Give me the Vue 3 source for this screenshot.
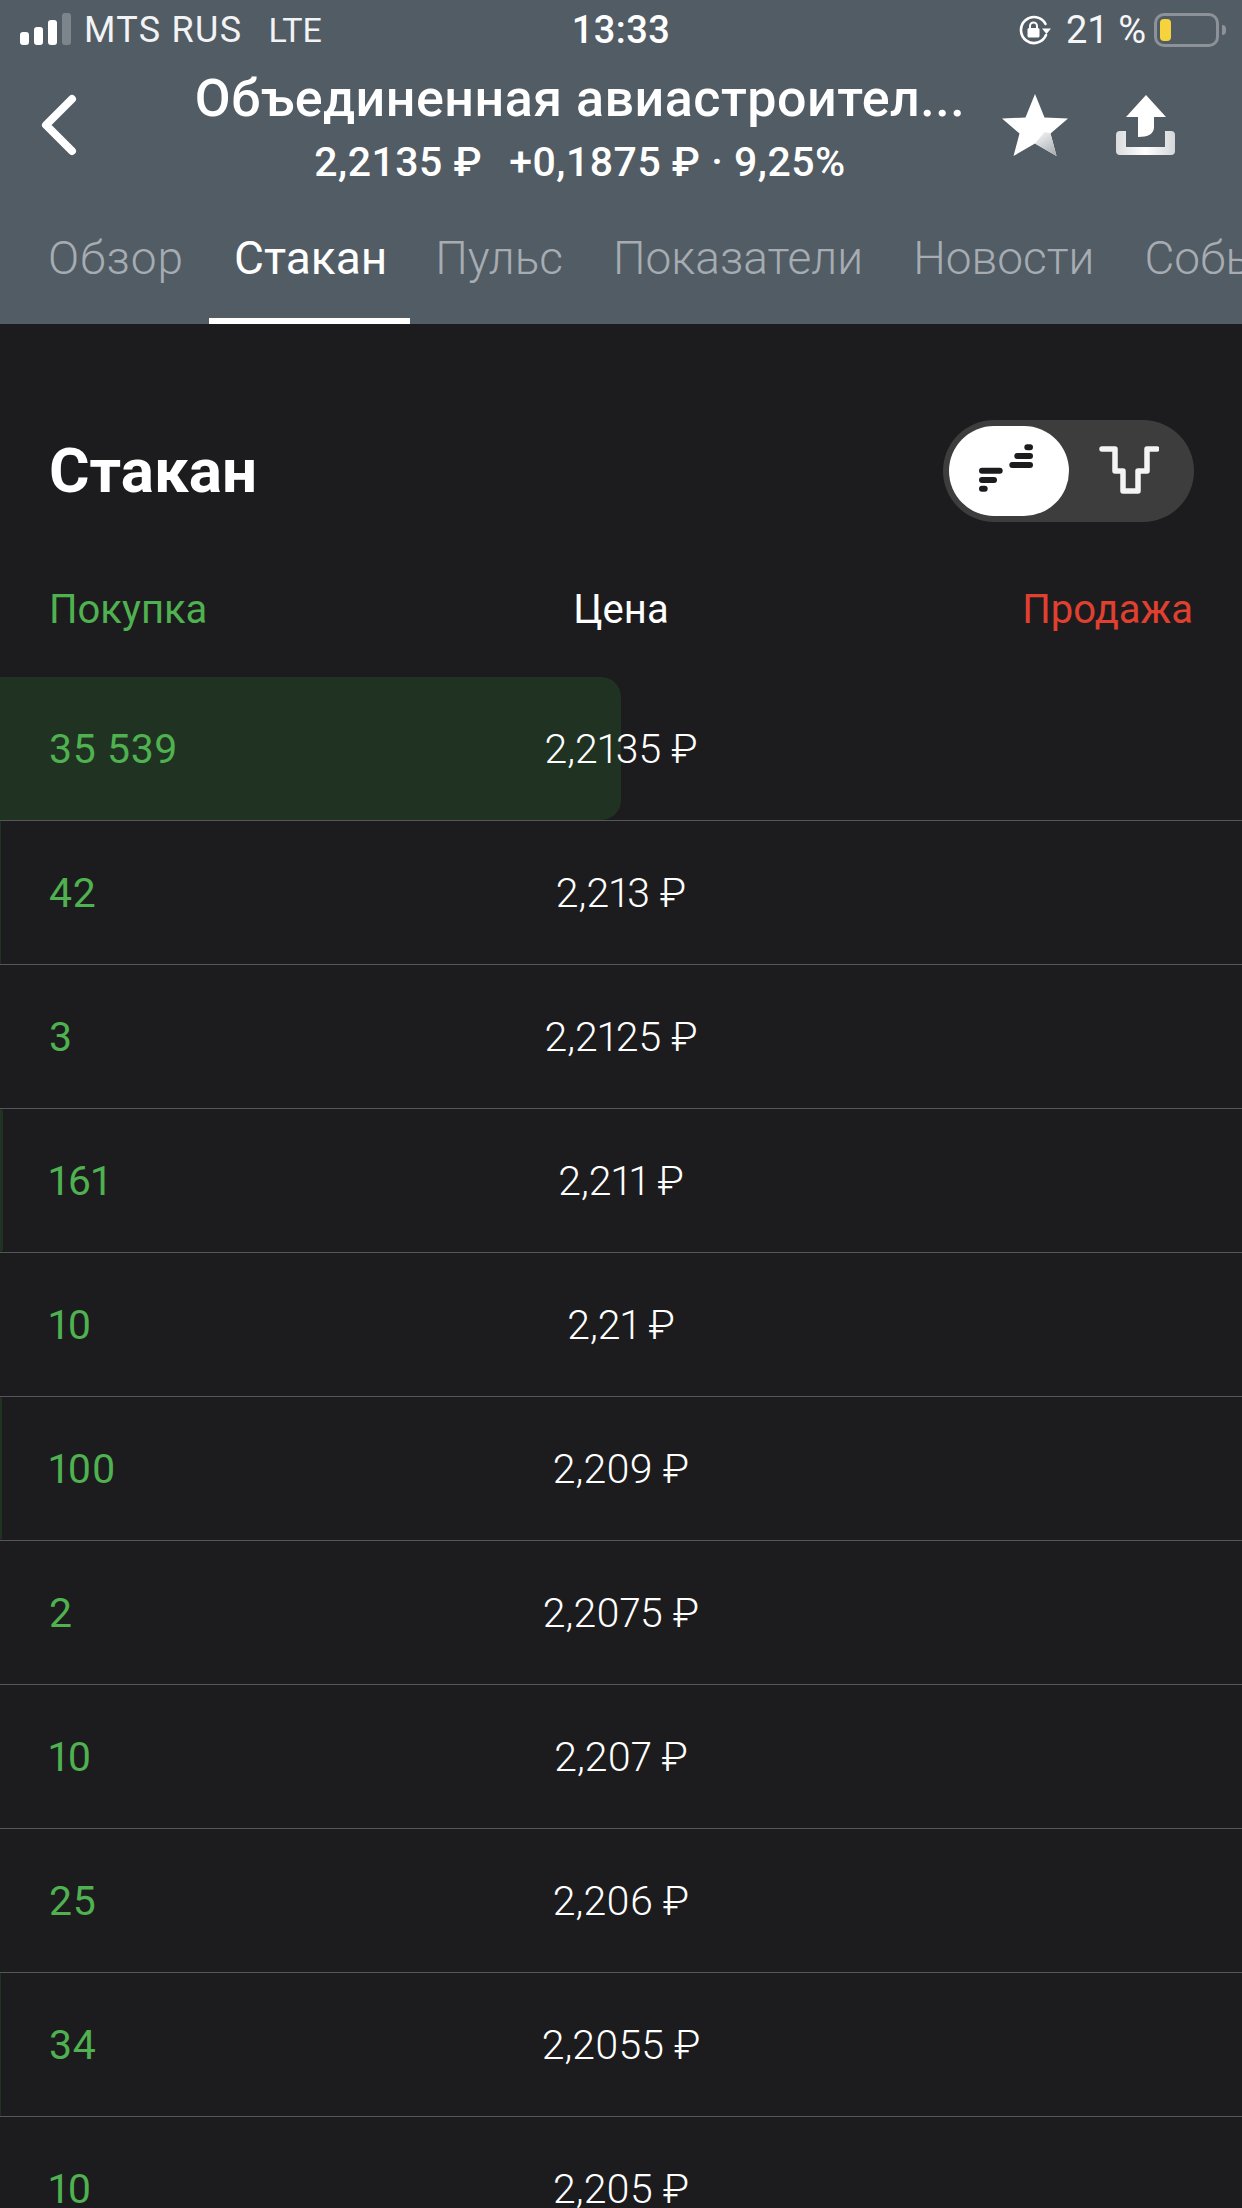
<script setup>
const tabs = [
  { label: 'Обзор' },
  { label: 'Стакан', active: true },
  { label: 'Пульс' },
  { label: 'Показатели' },
  { label: 'Новости' },
  { label: 'События' },
]
const rows = [
  { qty: '35 539', price: '2,2135 ₽', bar: 621 },
  { qty: '42', price: '2,213 ₽', bar: 1 },
  { qty: '3', price: '2,2125 ₽', bar: 0 },
  { qty: '161', price: '2,211 ₽', bar: 3 },
  { qty: '10', price: '2,21 ₽', bar: 0 },
  { qty: '100', price: '2,209 ₽', bar: 2 },
  { qty: '2', price: '2,2075 ₽', bar: 0 },
  { qty: '10', price: '2,207 ₽', bar: 0 },
  { qty: '25', price: '2,206 ₽', bar: 0 },
  { qty: '34', price: '2,2055 ₽', bar: 1 },
  { qty: '10', price: '2,205 ₽', bar: 0 },
]
</script>

<template>
  <div class="page">
    <header class="head">
      <div class="status">
        <div class="status-left">
          <svg class="signal" width="54" height="34" viewBox="0 0 54 34">
            <rect x="0" y="19" width="9" height="13" rx="3" fill="#fff" />
            <rect x="14" y="14" width="9" height="18" rx="3" fill="#fff" />
            <rect x="28" y="7" width="9" height="25" rx="3" fill="#fff" />
            <rect x="42" y="0" width="9" height="32" rx="3" fill="#7d858c" />
          </svg>
          <span class="carrier">MTS RUS</span>
          <span class="net">LTE</span>
        </div>
        <div class="time">13:33</div>
        <div class="status-right">
          <svg width="34" height="30" viewBox="0 0 34 30">
            <path d="M28 20A13 13 0 1 1 27.500 9" fill="none" stroke="#fff" stroke-width="2.600" stroke-linecap="round" />
            <path d="M24 13.500h9l-4.500 5.500z" fill="#fff" />
            <rect x="9.500" y="13" width="12" height="9.500" rx="1.500" fill="#fff" />
            <path d="M12 13.500v-2.500a3.500 3.500 0 0 1 7 0v2.500" fill="none" stroke="#fff" stroke-width="2" />
          </svg>
          <span class="battery-text">21 %</span>
          <div class="battery">
            <div class="battery-body"><div class="battery-level"></div></div>
            <div class="battery-tip"></div>
          </div>
        </div>
      </div>

      <div class="nav">
        <svg class="back" width="38" height="64" viewBox="0 0 38 64">
          <path d="M32 6L6 32l26 26" fill="none" stroke="#fff" stroke-width="8" stroke-linecap="round" stroke-linejoin="round" />
        </svg>
        <div class="heading">
          <div class="title">Объединенная авиастроител...</div>
          <div class="sub"><span>2,2135 ₽</span><span>+0,1875 ₽ · 9,25%</span></div>
        </div>
        <div class="actions">
          <svg width="66" height="62" viewBox="0 0 66 62">
            <defs>
              <linearGradient id="starShade" x1="0.2" y1="0" x2="0.8" y2="1">
                <stop offset="0" stop-color="#f2f3f4" />
                <stop offset="1" stop-color="#a9aeb2" />
              </linearGradient>
            </defs>
            <path d="M33 0l9.500 23.500 23.500 1-17.500 15L54.500 62 33 49.500 11.500 62l6-22.500L0 24.500l23.500-1z" fill="#fff" />
            <path d="M33 49.500L42.500 38l6 1.500L54.500 62z" fill="url(#starShade)" />
          </svg>
          <svg width="60" height="60" viewBox="0 0 60 60">
            <defs>
              <linearGradient id="trayShade" x1="0" y1="0" x2="1" y2="0">
                <stop offset="0" stop-color="#d9dbdd" />
                <stop offset="0.5" stop-color="#ffffff" />
                <stop offset="1" stop-color="#d4d6d8" />
              </linearGradient>
            </defs>
            <path d="M0 40a4 4 0 0 1 4-4h6v16h39V36h6a4 4 0 0 1 4 4v16a4 4 0 0 1-4 4H4a4 4 0 0 1-4-4z" fill="url(#trayShade)" />
            <path d="M30 0L50 22H38v10c0 7-6 10-16 10V22H10z" fill="#fff" />
          </svg>
        </div>
      </div>

      <nav class="tabs">
        <div v-for="t in tabs" :key="t.label" class="tab" :class="{ active: t.active }">{{ t.label }}</div>
      </nav>
    </header>

    <main class="body">
      <div class="section-head">
        <h1 class="section-title">Стакан</h1>
        <div class="toggle">
          <div class="toggle-on">
            <svg width="60" height="54" viewBox="0 0 60 54">
              <g fill="none" stroke="#1c1c1e" stroke-width="6" stroke-linecap="round">
                <path d="M3 26.700h17.700M3 36h12M3 44.700h2.700" />
                <path d="M33.300 21h17.700M38.300 12h12.700M48.300 3.200h2.700" />
              </g>
            </svg>
          </div>
          <div class="toggle-off">
            <svg width="60" height="50" viewBox="0 0 60 50">
              <path d="M3 3h13v22h8v20h15V25h9V3h10" fill="none" stroke="#f4f4f4" stroke-width="5.500" stroke-linecap="round" stroke-linejoin="round" />
            </svg>
          </div>
        </div>
      </div>

      <div class="columns">
        <span class="buy">Покупка</span>
        <span class="mid">Цена</span>
        <span class="sell">Продажа</span>
      </div>

      <div class="rows">
        <div v-for="(r, i) in rows" :key="i" class="row">
          <div v-if="r.bar" class="bar" :style="{ width: r.bar + 'px' }"></div>
          <span class="qty">{{ r.qty }}</span>
          <span class="price">{{ r.price }}</span>
        </div>
      </div>
    </main>
  </div>
</template>

<style>
html, body { margin: 0; background: #1c1c1e; }
</style>

<style scoped>
.page {
  width: 1242px;
  height: 2208px;
  overflow: hidden;
  background: #1c1c1e;
  font-family: Roboto, "Liberation Sans", sans-serif;
  color: #fff;
}
.head {
  height: 324px;
  background: #525c65;
  display: flex;
  flex-direction: column;
}
.status {
  height: 60px;
  display: grid;
  grid-template-columns: 1fr auto 1fr;
  align-items: center;
  padding: 0 16px 0 20px;
  font-size: 34px;
}
.status-left, .status-right { display: flex; align-items: center; }
.status-right { justify-content: flex-end; }
.carrier { margin-left: 10px; font-size: 36px; letter-spacing: 1.3px; color: #f2f3f4; }
.net { margin-left: 26px; color: #f2f3f4; }
.time { font-weight: 500; font-size: 38px; letter-spacing: 0.4px; margin-left: -4px; }
.battery-text { margin-left: 14px; font-size: 38px; color: #f6f6f7; }
.battery { display: flex; align-items: center; margin-left: 8px; }
.battery-body {
  width: 65px;
  height: 34px;
  box-sizing: border-box;
  border: 3px solid #8c9298;
  border-radius: 10px;
  padding: 3px;
}
.battery-level { width: 11px; height: 100%; border-radius: 4px; background: #f6d33c; }
.battery-tip {
  width: 4px;
  height: 10px;
  margin-left: 3px;
  background: #8c9298;
  border-radius: 0 4px 4px 0;
}
.nav {
  height: 124px;
  display: flex;
  align-items: center;
  padding-left: 40px;
}
.back { flex: none; margin-top: 6px; }
.heading {
  width: 844px;
  margin-left: 80px;
  margin-top: 12px;
  text-align: center;
}
.title { font-size: 52px; font-weight: 500; line-height: 58px; letter-spacing: 0.5px; white-space: nowrap; }
.sub {
  font-size: 41px;
  font-weight: 500;
  line-height: 48px;
  margin-top: 10px;
  letter-spacing: 0.5px;
  display: flex;
  justify-content: center;
  gap: 27px;
}
.actions { display: flex; align-items: center; gap: 48px; margin-top: 6px; }
.tabs {
  flex: 1;
  display: flex;
  padding-left: 23px;
  overflow: hidden;
}
.tab {
  flex: none;
  padding: 50px 25px 0;
  font-size: 46px;
  line-height: 48px;
  color: #a6acb2;
  font-weight: 300;
  box-sizing: border-box;
  height: 140px;
}
.tab:first-child { letter-spacing: 1px; }
.tab.active { color: #fff; border-bottom: 6px solid #fff; font-weight: 400; padding-right: 23px; }
.section-head {
  height: 102px;
  margin-top: 96px;
  padding: 0 48px 0 49px;
  display: flex;
  align-items: center;
  justify-content: space-between;
}
.section-title { margin: 0 0 2px; font-size: 62px; font-weight: 700; }
.toggle {
  width: 251px;
  height: 102px;
  box-sizing: border-box;
  padding: 6px;
  border-radius: 51px;
  background: #3d3d3d;
  display: flex;
  align-items: center;
}
.toggle-on {
  width: 120px;
  height: 90px;
  border-radius: 45px;
  background: #fff;
  display: flex;
  align-items: center;
  justify-content: center;
}
.toggle-off { flex: 1; display: flex; justify-content: center; align-items: center; }
.columns {
  height: 44px;
  margin-top: 64px;
  padding: 0 49px;
  display: grid;
  grid-template-columns: 1fr auto 1fr;
  align-items: center;
  font-size: 40px;
}
.buy { color: #4fb14f; }
.mid { color: #fff; }
.sell { color: #e0402f; text-align: right; }
.rows { margin-top: 47px; }
.row {
  position: relative;
  height: 144px;
  box-sizing: border-box;
  border-bottom: 1px solid #55555a;
  display: grid;
  grid-template-columns: 1fr auto 1fr;
  align-items: center;
  padding: 0 49px;
  font-size: 41px;
  font-variant-numeric: proportional-nums;
}
.bar {
  position: absolute;
  left: 0;
  top: 0;
  bottom: 0;
  background: #203322;
  border-radius: 0 20px 20px 0;
}
.qty { position: relative; color: #4fb14f; letter-spacing: 0.6px; }
.price { position: relative; color: #fff; font-weight: 350; }
</style>
